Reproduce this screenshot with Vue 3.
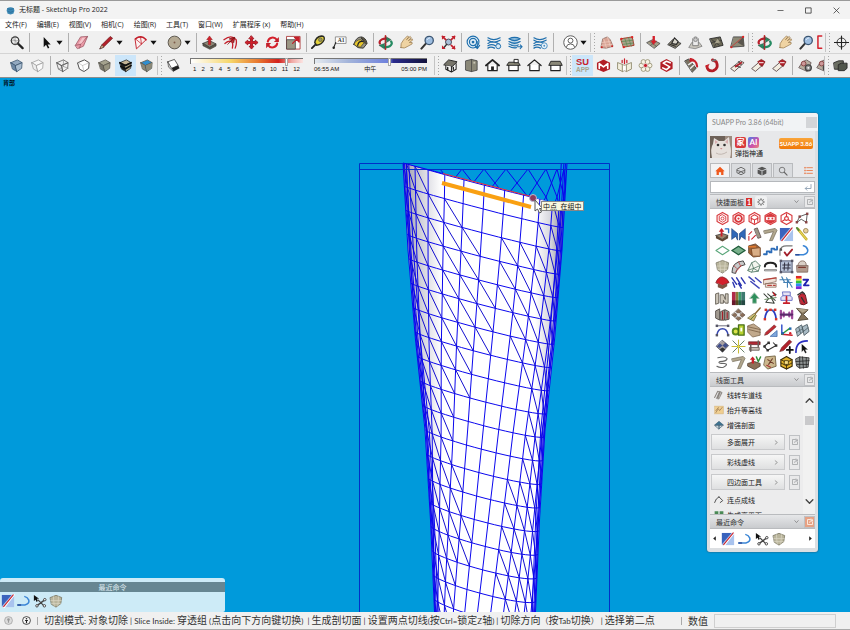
<script setup>
import { ref } from 'vue'

/* ---------- icon helpers (16 x 16 grid) ---------- */
const P = (d, f = 'none', s = 'none', w = 1) =>
  `<path d="${d}" fill="${f}" stroke="${s}" stroke-width="${w}" stroke-linejoin="round" stroke-linecap="round"/>`
const C = (x, y, r, f = 'none', s = 'none', w = 1) =>
  `<circle cx="${x}" cy="${y}" r="${r}" fill="${f}" stroke="${s}" stroke-width="${w}"/>`
const cube = (a, b, c, s = '#333') =>
  P('M2 5L9 2L14 5L7 8Z', a, s, 0.8) + P('M2 5L7 8L8.500 14.500L4 12Z', b, s, 0.8) + P('M7 8L14 5L13.500 11L8.500 14.500Z', c, s, 0.8)
const hexa = (inner) => P('M8 1.500L13.800 4.700V11.300L8 14.500L2.200 11.300V4.700Z', '#fff', '#d8383c', 1.2) + inner
const waves =
  P('M1 3Q7 7 14 3M1 5.500Q7 9.500 14 5.500M1 9Q6 5.500 13 9.500M1 11.500Q5 9 9 11.500M1 14Q4 12 8 14', 'none', '#1f6fad', 1.3)
const houseBase = P('M3 7.500V13.500H13V7.500', '#fff', '#222', 1.2)
const squares = (pts, c) => pts.map(([x, y]) => `<rect x="${x - 1.300}" y="${y - 1.300}" width="2.6" height="2.6" fill="${c}"/>`).join('')

const icons = {
  mag: C(6.5, 6, 4, '#eee', '#333', 1.3) + P('M9.500 9L14.500 14', 'none', '#222', 2.4) + P('M6.500 1V11M1.500 6H11.500M3 2.500L10 9.500', 'none', '#777', 0.5),
  cursor: P('M5 2V13L7.500 10.500L9.500 14.500L11 13.700L9.200 10H12.500Z', '#111'),
  eraser: P('M1.500 11L7 2L14.500 1.500L10 12L4 14.500Z', '#e99aa6', '#9b5462', 0.8) + P('M1.500 11L7 10L14.500 1.500M7 10L6 14', 'none', '#9b5462', 0.8) + P('M5 9L9 3L12 3L8 9Z', '#f6c5cb'),
  pencil: P('M1 14.500L3 10.500L12 1.500L14.500 3.500L5 12.800Z', '#b3202b', '#611', 0.7) + P('M1 14.500L3 10.500L5 12.800Z', '#d8b58c', '#333', 0.5),
  arc: P('M2.500 4Q9 -0.500 14 5L4 14.500Z', '#fbf0f0', '#c3202c', 1) + P('M2.500 4Q9 -0.500 14 5', 'none', '#c3202c', 1.5) + P('M2.500 4L9 9.500M8 2L9 9.500', 'none', '#c3202c', 0.8),
  disc: C(8, 8, 6.8, '#b5aa94', '#57524a', 1) + C(8, 8, 1, '#7d5a4a'),
  pushpull: P('M1 9L8 6L15 9.500L8.500 13Z', '#8c8674', '#333', 0.8) + P('M1 9V11.500L8.500 15.300L15 11.800V9.500L8.500 13Z', '#5b5648', '#333', 0.6) + P('M6.800 10V5H5L8 1L11 5H9.200V10Z', '#d4202b', '#811', 0.5),
  offset: P('M1 5Q9 -1 14 5Q15 9 13 14', 'none', '#c3202c', 1.4) + P('M2 9Q7 5 10 8Q11 11 10 14', 'none', '#c3202c', 1.4) + P('M5 10L12 3M7 4L12.500 2.500L11.500 8Z', '#c3202c', '#711', 0.8),
  move: P('M8 1L10.500 4H9V7H12V5.500L15 8L12 10.500V9H9V12H10.500L8 15L5.500 12H7V9H4V10.500L1 8L4 5.500V7H7V4H5.500Z', '#d4202b', '#a11822', 1),
  rotate: P('M3 7A5.300 5.300 0 0 1 12.500 5', 'none', '#d4202b', 2.2) + P('M13 9A5.300 5.300 0 0 1 3.500 11', 'none', '#d4202b', 2.2) + P('M14.800 2V7.500H9.500ZM1.200 14V8.500H6.500Z', '#c11f2a'),
  scale: P('M1 1.500H15V15H1Z', '#fff', '#a33', 0.9) + P('M1 5H10V15H1Z', '#9b9684', '#444', 0.8) + P('M7 9L12 4M9 2.500H14V7.500Z', '#d4202b', '#c11f2a', 1.3),
  tape: P('M1 14L5 10', 'none', '#222', 2) + P('M4 8Q5 2 11 1Q15 1 14 5Q12 10 6 11Z', '#e4d23c', '#2a2a22', 1.5) + C(10, 5, 2, '#9e9a58', '#444', 0.6),
  label: P('M4 2H15V9H4Z', '#fff', '#777', 0.8) + `<text x="6" y="7.800" font-size="6" font-family="Liberation Serif, serif" font-weight="700" fill="#333">A1</text>` + P('M4 8L2 13', 'none', '#222', 1.1) + C(1.8, 13.5, 1.3, '#222'),
  paint: P('M1 10Q3 2 9 2Q14 3 15 9L11 14Q5 15 1 10Z', '#9a9582', '#333', 1) + P('M1 10Q3 5 8 5L12 8L8 13Q4 13 1 10Z', '#e8c72c', '#444', 0.8) + P('M5 11Q6 6 11 7M9 3L14 9', 'none', '#222', 1.3) + P('M9 2Q13 3 15 9L12 9Q11 5 9 2Z', '#55503f'),
  orbit: P('M8 1V15', 'none', '#b22', 1.8) + P('M2 9A6 4 0 0 1 11 4.500', 'none', '#b71f2b', 2.3) + P('M14 7A6 4 0 0 1 5 12', 'none', '#258a61', 2.4) + P('M9 2L14 5L9 8ZM7 9L1 11L7 15Z', '#258a61', '#333', 0.4) + P('M8 5V14', 'none', '#933', 1),
  hand: P('M2 13.500Q1 9 5 5L9 1L10.500 2L8 5L12 1.500L13 3L10 6L14 4L14.500 5.500L11 8L14 8L14 9.500L9.500 12Q6 15 2 13.500Z', '#efd3a2', '#907045', 0.7),
  glass: P('M1.500 14.500L6 9.500', 'none', '#333', 2.2) + C(9.8, 5.8, 4.4, '#9dbde0', '#3c5673', 1.4) + P('M7.500 5Q8.500 3 10.500 3', 'none', '#e5f1fc', 1),
  extents: C(8, 7.5, 3.2, '#a8bfd8', '#445', 1) + P('M6 10L3 13.500', 'none', '#333', 1.6) + P('M1.500 1.500L5 5M14.500 1.500L11 5M14.500 14.500L11 11', 'none', '#c3202c', 1.8) + P('M1 1H5L1 5ZM15 1V5L11 1ZM15 15H11L15 11ZM1 15V11L5 15Z', '#c3202c'),
  swirl: C(7.5, 7.5, 6.3, '#e4f0f8', '#1f6fad', 1.2) + C(7.5, 7.5, 3.8, 'none', '#1f6fad', 1.3) + C(7.5, 7.5, 1.5, '#1f6fad') + P('M12 7V13M9.500 11L12 14.500L14.500 11', 'none', '#1f6fad', 1.2),
  stackA: waves + C(12, 12, 2.6, '#d7e8f4', '#1f6fad', 1),
  stackB: P('M1 4Q7 1 13 4Q7 8 1 4ZM1 7Q7 11 13 7M1 9.500Q7 13.500 11 10.500M1 12Q5 14.500 9 13.500', '#8dbcdc', '#1f6fad', 1.2) + P('M10 12.500H15M13 10.500L15 12.500L13 14.500', 'none', '#1f6fad', 1.1),
  stackC: waves + C(12, 11.5, 3.2, '#e7f1f8', '#4b8fc3', 1) + C(12, 11.5, 1, '#4b8fc3'),
  account: C(8, 8, 7.2, '#fff', '#555', 1) + C(8, 6, 2.6, '#fff', '#555', 1) + P('M3.500 13Q4 9.500 8 9.500Q12 9.500 12.500 13', 'none', '#555', 1),
  sandA: P('M2 13L4 4L9 2L12 5L15 12L8 14Z', '#d8a394', '#8d6b60', 0.8) + P('M3 8L12 7M5 4L8 14M9 2L12 12M2.500 11L14 10', 'none', '#f2d0c4', 0.7) + C(3, 13, 1, '#c22') + C(14, 12, 1, '#c22'),
  sandB: P('M1 4L13 2L15 11L4 13Z', '#a9a48c', '#a32', 1) + P('M5 3.500L8 12.500M9 2.500L12 12M2 7L14 5.500M3 10L14.500 8.500', 'none', '#5c8a55', 0.8) + C(1.5, 4, 1.2, '#d22') + C(13, 2.3, 1.2, '#d22') + C(4, 13, 1.2, '#d22'),
  smoove: P('M1 8L7 5L15 9L9 14Z', '#a49d86', '#444', 0.8) + P('M4 7L11 12M11 7L5 11', 'none', '#444', 0.6) + P('M7 1H9.500V6H11.500L8 10.500L5 6H7Z', '#d4202b'),
  stamp: P('M1 10L6 5L15 9L9 14Z', '#8c8775', '#333', 0.9) + P('M5 9L8 3L12 7L10 10Z', '#d8d5ca', '#222', 1.1) + P('M3 10L9 12', 'none', '#222', 1),
  drape: P('M1 13L4 8L12 8L15 12L8 14.500Z', '#c9c6bd', '#777', 0.8) + P('M5 11V4Q8 0 11 4V11Z', '#ececec', '#777', 0.9) + C(8, 5, 2, '#ccc', '#777', 0.8),
  detail: P('M1 4L12 2L15 11L5 13.500Z', '#6c6957', '#222', 0.9) + P('M3 5L11 11M10 3L6 12M2.500 8L13 6', 'none', '#333', 0.8) + P('M9 4L12 8L6 9Z', '#aaa58f'),
  flip: P('M4 2L14 2L15 12L1 13Z', '#8d8976', '#444', 0.9) + P('M14 2L15 12L8 8Z', '#5a564e') + P('M1 13L14 2', 'none', '#c33', 0.8) + C(14, 2, 1.2, '#d22') + C(1.500, 13, 1.1, '#d22'),
  cut: P('M1 1H5M1 1V14H5', 'none', '#d4202b', 1.6),
  target: C(8, 8, 4.8, 'none', '#333', 1) + P('M8 1V15M0 8H16', 'none', '#222', 1.2),
  xray: cube('#93a9c0', '#6d88a5', '#a9bdd0', '#35506b'),
  backedge: cube('#f8f8f8', '#eee', '#fafafa', '#999'),
  wire: cube('none', 'none', 'none', '#555') + P('M4 12L9 9L14 11M9 2V9', 'none', '#777', 0.6),
  hidden: P('M2 5L9 2L14 5L13.500 11L8.500 14.500L4 12Z', '#fff', '#444', 1) + P('M2 5L7 8L14 5M7 8L8.500 14.500', 'none', '#aaa', 0.6),
  shaded: cube('#a4a28e', '#77756a', '#96937f', '#55534a'),
  textured: cube('#c5b596', '#222', '#b3a482', '#222') + P('M2 5L8 8L14 5M3 9L8 11.500L14 8', 'none', '#111', 1.7),
  mono: cube('#2f8fd0', '#8a8979', '#2f80bd', '#55534a') + P('M7 8L14 5L13.500 11L8.500 14.500Z', '#8d8a78'),
  section: P('M2 4L9 1.500L13 8L6 11Z', '#fff', '#444', 0.9) + P('M6 11L13 8L14.500 11L8 14.500Z', '#222') + P('M2 4L6 11L8 14.500L3 10Z', '#ccc', '#444', 0.7),
  iso: P('M1 7L6 2L15 4L10 9Z', '#77756a', '#222', 1) + P('M3 8V12L9 15V9M9 15L14 12V6', '#f6f6f6', '#222', 1.1) + P('M5 10V12.500M11 10V12', 'none', '#222', 1.5),
  top: P('M2 3L8 1.500L14 3V13L8 14.500L2 13Z', '#8a8878', '#444', 0.9) + P('M8 1.500V14.500', 'none', '#444', 0.8) + P('M10 4H12V6H10Z', '#c9c6b5'),
  front: houseBase + P('M1 8L8 2L15 8', 'none', '#222', 1.9) + P('M6.500 9H9.500V13.500H6.500Z', '#222'),
  right: houseBase + P('M1 7.500L3 4.500H13L15 7.500Z', '#8a8878', '#222', 1) + P('M9 1.500H13V5H9Z', '#fff', '#222', 1),
  back: houseBase + P('M1 8L8 2L15 8', 'none', '#222', 1.4),
  left: houseBase + P('M1 7.500L3 3.500H13L15 7.500Z', '#8a8878', '#222', 1),
  suapp: `<text x="1" y="7.500" font-size="10" font-family="Liberation Sans, sans-serif" font-weight="700" fill="#c8202a">SU</text><text x="1" y="15" font-size="7" font-family="Liberation Sans, sans-serif" font-weight="700" fill="#aaa58c">APP</text>`,
  mred: P('M1 5L8 1.500L15 5V12L8 15L1 12Z', '#b31e26') + P('M3.500 11V6L8 9.500L12.500 6V11', 'none', '#fff', 1.8),
  book: P('M1 5L6 7V14.500L1 12ZM15 5L10 7V14.500L15 12Z', '#f3efdf', '#8b8566', 0.9) + P('M6 7L8 8L10 7V14.500L8 13.500L6 14.500Z', '#fff', '#8b8566', 0.7) + P('M8 6V1M5.500 5V2.500M10.500 5V2.500', 'none', '#c8202a', 1.3),
  flower: [0, 60, 120, 180, 240, 300].map((a) => C(8 + 4.4 * Math.cos(a * 0.01745), 8 + 4.4 * Math.sin(a * 0.01745), 2.5, '#f7f3e3', '#8b8566', 0.8)).join('') + C(8, 8, 2.2, '#c8202a', '#fff', 0.7),
  sred: P('M8 1L14.500 4.500V11.500L8 15L1.500 11.500V4.500Z', '#b31e26') + P('M12 5L8 3.500L4.500 5.500L11.500 9.500L8 12.500L4 10.500', 'none', '#fff', 1.7),
  toolA: P('M1 3L5 1L13 11L9 15Z', '#77705f', '#333', 0.8) + P('M5 7L8 5M7 11L10 8', 'none', '#eee', 1.5) + P('M7 3Q13 1 14 9M10 2L7 1', 'none', '#c8202a', 2.2),
  toolB: P('M2 9Q3 14.500 9 13.500Q15 11 12 4L8 2', 'none', '#b31e26', 3) + P('M5 6L2 12L0.500 8Z', '#c8202a') + P('M8 3L11 2', 'none', '#777', 2),
  planA: P('M1 11L11 3L15 5L5 14Z', '#f2ede0', '#544', 0.9) + P('M5 8L11 10M9 4L12 7', 'none', '#555', 1.2) + P('M6 9L12 5', 'none', '#b0202a', 2),
  planB: P('M1 11L8 5L12 8L5 14Z', '#f2ede0', '#544', 0.9) + P('M7 4L11 1.500L15 4L12 9L9 7', '#b0202a', '#711', 0.7) + P('M9 5L13 5', 'none', '#fff', 1),
  gear: P('M1 10L5 4L9 2L14 5L10 14Z', '#b8aea0', '#655', 0.9) + C(6, 6, 2.5, '#c99', '#844', 1) + C(11, 10.5, 3.2, '#999', '#444', 1.4) + C(11, 10.5, 1, '#fff'),
  solid: P('M1 5L6 3H11V8L8 12H2Z', '#6b6e62', '#222', 0.9) + P('M6 7L9 5.500H15V11L12 13.500H6Z', '#50564c', '#222', 0.9),

  hexA: hexa(P('M8 4L11.500 6V10L8 12L4.500 10V6Z', 'none', '#d8383c', 1) + C(8, 8, 1.6, '#fff', '#d8383c', 1)),
  hexB: hexa(C(8, 8, 3.6, 'none', '#d8383c', 2) + C(8, 8, 1.2, '#d8383c')),
  hexC: hexa(P('M4.500 11V6L8 4L11.500 6V11M4 7.500L8 9.500L12 7.500M8 9.500V13', 'none', '#d8383c', 1.1)),
  hexD: hexa(P('M3 5L8 2.500L13 5V6H3ZM3 10H13V11L8 13.500L3 11Z', '#d8383c') + P('M3 6H13V10H3Z', '#fff', '#d8383c', 1) + C(6, 8, 1, '#d8383c') + C(10, 8, 1, '#d8383c')),
  hexE: hexa(P('M8 8V3M8 8L3.500 11M8 8L12.500 11', 'none', '#d8383c', 1.2) + C(8, 8, 2, '#fff', '#d8383c', 1.2)),
  poly: P('M2 12L5 6L13 3L12 12L7 9Z', 'none', '#555', 1) + squares([[2, 12], [5, 6], [13, 3], [12, 12]], '#844'),
  boxup: P('M1 9L8 7L14 9L8 13Z', '#9d866c', '#333', 0.8) + P('M1 9V12L8 15.500L14 12V9L8 13Z', '#5d4634') + P('M6 10V5H4L7 1L10 5H8V10Z', '#c8202a') + P('M11 2H14.500V6', 'none', '#2a6fc0', 1.5),
  wings: P('M1 2L7 7V14L5 10L1 13ZM15 2L9 7V14L11 10L15 13Z', '#2f68b8', '#1a3f7a', 0.7),
  stick: P('M8 2L11 1L15 11L12 12Z', '#9c9584', '#544', 0.8) + P('M2 14V10M2 8L5 5M5 13L9 9', 'none', '#c8202a', 1.1),
  corner: P('M1 4L13 1.500L15 3.500L10 14.500H7L11 5L2 7Z', '#b1a78e', '#6d644f', 0.7),
  split: P('M1 1H15V15H1Z', '#a9c3ee') + P('M1 1H12L1 14Z', '#3a63bd') + P('M3.500 15L14.500 1', 'none', '#fff', 2.4) + P('M3 14.500L14 1', 'none', '#c8202a', 1.2),
  tools: P('M3 2L12 13', 'none', '#c9b228', 2.8) + P('M3 2L12 13', 'none', '#efe07a', 0.9) + C(11.5, 4, 2.5, '#e8cf9a', '#8a7444', 0.8) + P('M2 1L4 3.500', 'none', '#558a3b', 2),
  diaO: P('M1 8L8 3.500L15 8L8 12.500Z', '#fff', '#5aa67a', 1.1),
  diaF: P('M1 8L8 3.500L15 8L8 12.500Z', '#79b08c', '#1f5c3a', 1.5),
  brown: P('M2 3L9 1L14 5V14L7 15L2 11Z', '#9c6238', '#5d3820', 0.8) + P('M5 6L14 5V14L6 14Z', '#d9ae86', '#7d4c2a', 0.8) + P('M2 4H9', 'none', '#e07a30', 1.6),
  steps: P('M1 12H4V9H7V10H9V6H12V7H15V4', 'none', '#2c6cb8', 1.9),
  check: P('M1 13V8Q2 3 8 3H14', 'none', '#777', 1.2) + P('M6 10L8.500 13.500L14 7', 'none', '#a3202a', 1.9) + squares([[2, 7]], '#555'),
  hook: P('M1 12.500H9Q14.500 11 13.500 7Q12 3.500 9 3', 'none', '#3b86d6', 1.7) + P('M1 12.500H4', 'none', '#2c4e9a', 1.8),
  shield: P('M1.500 4L8 1.500L14.500 4L13.500 11L8 15L3 12Z', '#b9b59c', '#6f6b58', 0.8) + P('M5 3L6 14M11 3L10 14M2 7.500L14 7.500M3 11H13', 'none', '#dad6c4', 0.8),
  fan: P('M1 14Q1 3 13 2L15 6Q6 8 5 15Z', '#c9c9c9', '#444', 1) + P('M5 14L11 7M3 7L6 10M8 3L10 7', 'none', '#b33', 0.8),
  wirepoly: P('M1 12L5 4L9 2L14 7L12 13L5 14Z', '#f3f5ef', '#4c7460', 0.9) + P('M5 4L7 10L14 7M7 10L5 14M7 10L12 13M1 12L7 10', 'none', '#4c7460', 0.8),
  arch: P('M2 8Q2 4 8 4Q14 4 14 8', 'none', '#222', 2.2) + P('M2 12H14', 'none', '#666', 2) + P('M2 12H14', 'none', '#ddd', 0.8),
  hash: P('M2 2H14V14H2Z', '#b8c3d8', '#4d5571', 1) + P('M6 4L5.500 12M10 4L9.500 12M4 6.500H12M4 9.500H12', 'none', '#334', 1.1) + squares([[2, 2], [14, 2], [2, 14], [14, 14]], '#556'),
  bag: P('M3 7Q4 2 8 2Q12 2 12 7', '#d9cfc6', '#8b7468', 1) + P('M2 7H14L13.500 14H2.500Z', '#b29a8c', '#7b6256', 0.8) + P('M4 9H11', 'none', '#7b3a30', 1.4),
  roof: P('M1 8Q3 2 8 2Q13 3 15 8L8 11Z', '#d4202b', '#7c1118', 0.8) + P('M3 9V13L8 15L13 12V9L8 11Z', '#7d5442'),
  dashA: P('M1 3L6 10M6 3L11 11M11 3L15 9M2 8L4 13M8 9L11 14', 'none', '#2c35b0', 1.5),
  dashB: P('M2 2L8 7M4 7L13 14M9 3L15 8', 'none', '#3f46b8', 1.5),
  paper: P('M1 5L14 3V7L1 10ZM3 9H14V13H3Z', '#f0e2d8', '#8a6a5a', 0.8) + P('M1 5L14 3M5 11H9M11 11H13', 'none', '#b8403a', 1.3),
  lines: P('M1 5H12M3 2L6 8M8 3L14 13M5 8H14M9 6V13', 'none', '#4380b4', 1.2),
  rainbow: P('M1 1H7V4H1Z', '#e02828') + P('M1 4H7V6H1Z', '#f2e32c') + P('M1 6H7V9H1Z', '#35c23a') + P('M1 9H7V12H1Z', '#2a8ff0') + P('M1 12H7V15H1Z', '#7a2bd8') + P('M9 5H14L9.500 11H14.500', 'none', '#2222b0', 2),
  emm: P('M1 3L4 2V13L1 14ZM6 4H9L11 9V3H14V13H11L9 10V13H6Z', '#ccc6ba', '#5d564c', 0.9),
  grad: P('M1 1H5V15H1Z', '#b02a48') + P('M5 1H8V15H5Z', '#8c7a38') + P('M8 1H11V15H8Z', '#3d9a6c') + P('M11 1H15V15H11Z', '#3e7a70') + P('M1 10H15V15H1Z', '#0006'),
  greenup: P('M8 2L13 8H10V13H6V8H3Z', '#2f8f5b', '#9ab9a5', 0.8),
  scribble: P('M1 3L6 8L3 12L12 13L8 6L14 4L10 1M5 3L13 10', 'none', '#3a4038', 1.1) + P('M2 9L14 7', 'none', '#5f8a5a', 1) + P('M11 2L13 5', 'none', '#c8202a', 1.5),
  press: P('M4 1H12V5L14 7V10H2V7L4 5Z', '#e6e2f4', '#6a6fc4', 1) + P('M4 5H12', 'none', '#6a6fc4', 1) + P('M5 13H11M8 6V13', '#c8202a', '#c8202a', 1.8),
  tank: P('M4 5Q7 1 11 4L13 13Q9 16 6 14Z', '#c02a38', '#5d1118', 0.9) + P('M3 4L8 1L10 3M7 7L10 12', 'none', '#333', 1.4),
  city: P('M1 4L5 2V14L1 12ZM6 5L10 3V14H6ZM11 3L15 5V13L11 14Z', '#a19a90', '#4a423e', 0.9) + P('M8 5V13M13 6V12', 'none', '#a3202a', 1.2),
  tiles: P('M8 2L11 5L8 7L5 5ZM4 6L7 8.500L4 11L1 8.500ZM12 6L15 8.500L12 11L9 8.500ZM8 10L11 12L8 14.500L5 12Z', '#8b6f5a', '#4a3a30', 0.6) + P('M8 6.500L10 8.500L8 10.500L6 8.500Z', '#eee'),
  broom: P('M14 1L8 8', 'none', '#8a6c3a', 1.6) + P('M8 7L10 9L7 15L1 12Z', '#cbb66e', '#6d6030', 0.8) + P('M4 13L8 9', 'none', '#59742d', 1),
  archB: P('M2 13Q3 3 8 3Q13 3 14 13', 'none', '#2b3dc0', 1.9) + P('M3 3H13', 'none', '#888', 0.8) + squares([[2, 13], [3, 3], [8, 3], [13, 3], [14, 13]], '#d4322b'),
  purple: P('M2 4V12M14 4V12M5 6V10M11 6V10', 'none', '#a04a9a', 2.4) + P('M2 8H14', 'none', '#5a2a6a', 2.4),
  hour: P('M2 1.500L14 3L9 8L14 13L3 14.500L7 8Z', '#84745c', '#4b402e', 0.9) + P('M2 1.500L14 3L8 6Z', '#b3a68c'),
  archS: P('M2 13Q3 6 8 6Q13 6 14 13', 'none', '#3949b0', 1.6) + P('M2 3H14', 'none', '#667', 1) + squares([[2, 3], [14, 3], [2, 13], [14, 13]], '#556'),
  lock: C(5, 9, 3.2, '#dbe24a', '#5c8a1c', 2) + P('M8 2H14V13H8Z', '#b8d230', '#4a701a', 1.4) + P('M10 5H12V9H10Z', '#fff'),
  stair: P('M1 3L7 1L14 6V13L6 15L1 10Z', '#c1a98c', '#7b6248', 0.8) + P('M1 4L14 7M2 7L14 10', 'none', '#7b6248', 0.9),
  penblue: P('M3 10L12 2L14 4L5 12L2 13Z', '#c02a32', '#611', 0.6) + P('M8 14L15 8V14Z', '#7fa8dc', '#3a66a8', 0.8),
  axes: P('M3 2V12', 'none', '#2a49c8', 1.5) + P('M3 12L14 13', 'none', '#c8202a', 1.5) + P('M3 12L11 6', 'none', '#2f9a3c', 1.4) + squares([[4, 11], [12, 6]], '#26a') + C(12, 11, 1.3, '#d4202b'),
  panes: P('M1 6L7 2L9 9L3 14ZM8 4L13 1.500L15 9L10 13Z', '#a9bbc5', '#47585f', 0.9) + P('M4 4.500L6 11M2 10L8 6M9 9L14 5', 'none', '#47585f', 0.8),
  checker: P('M8 1.500L14.500 7L8 14L1.500 8Z', '#a8a0a0', '#445', 0.8) + P('M5 4.500L8 7L5 9.500L2 8ZM11 4L14 7L11 9.500L8 7Z', '#42508c') + P('M8 9L11 11L8 14L5 11Z', '#333'),
  starl: P('M2 2L14 14M14 2L2 14', 'none', '#4e6b50', 0.9) + P('M8 1V15M1 8H15', 'none', '#c9bd38', 1.1) + C(8, 8, 1.4, '#e8d840'),
  vise: P('M2 3H14V6H2Z', '#b32a34', '#5d1118', 0.7) + P('M3 9H13V12H3Z', '#c7bdb4', '#5a4d48', 0.8) + P('M4 6V13M12 2V8', 'none', '#6b5d58', 1.6),
  polyl: P('M1 8L6 4L7 5M5 12L14 7L11 4M5 12L2 9', 'none', '#333', 1.1) + squares([[1.7, 8], [6, 4], [5, 12], [14, 7]], '#333'),
  penplus: P('M1 13L3 9L11 1L13.500 3L5 12Z', '#b3202b', '#611', 0.7) + P('M11.500 8.500V15M8.300 11.700H14.800', 'none', '#111', 1.9),
  arcsel: P('M1 14Q1 2 13 2', 'none', '#2a2fc0', 1.8) + P('M7 5V14L9 12L11 15.500L12.500 14.500L11 11.500H14Z', '#111', '#fff', 0.4),
  spiral: P('M3 3Q11 1 13 4Q12 7 5 7Q2 9 10 9Q15 10 9 13Q5 14 2 12', 'none', '#666', 1.1),
  redv: P('M1 9L8 7L14 9V12L8 15.500L1 12Z', '#8c7058', '#4b3a2c', 0.8) + P('M5 9V5H3L6 1.500L9 5H7.500V9Z', '#c8202a') + P('M10 2L12 7L14.500 2', 'none', '#2f8f3b', 1.5),
  card: P('M3 2L13 1L14 12L5 15L1 11Z', '#cbb68c', '#6b5a38', 0.9) + P('M5 5L11 9M10 4L6 10', 'none', '#6b3a28', 1.1) + P('M4 11L8 13', 'none', '#a33', 1.3),
  gold: P('M2 5L8 1.500L14 5V12L8 15L2 12Z', '#e3b42a', '#3a2c08', 1.2) + P('M2 5L8 8L14 5M8 8V15M2 8.500L8 11.500L14 8.500', 'none', '#3a2c08', 0.9) + P('M6 6H10V10H6Z', '#f7df86', '#3a2c08', 0.8),
  mesh: P('M1 4L5 2L15 3L14 13L5 14L2 12Z', '#8f9494', '#333', 0.9) + P('M1 7L15 6M2 10L14 10M5 2V14M8 2L9 14M12 3V13', 'none', '#222', 0.8),
  nodes: P('M1 1V8L3 6.500L4 9L5.500 8L4.500 5.500H7Z', '#111') + P('M5 13L13 7M6 7L12 13', 'none', '#444', 1.5) + C(13.5, 6.5, 1.4, '#fff', '#333', 1) + C(13, 13.5, 1.4, '#fff', '#333', 1) + C(4.5, 13.5, 1.4, '#fff', '#333', 1),
  road: P('M4 13L9 2L13 4L8 14Z', '#8b8580', '#6a645e', 0.8) + P('M1 12L6 2L8 3', 'none', '#8b8580', 1.7) + P('M8 12L11 4', 'none', '#ddd', 0.9),
  contour: P('M1 2H15V14H1Z', '#f0cf91', '#cfa96b', 0.8) + P('M3 12L7 6L9 9L13 4M3 9L7 4', 'none', '#9b7a54', 1.2),
  dome: P('M1 8L8 2L15 8Z', '#3f7592', '#2c4f64', 0.8) + P('M2 9H14L8 14Z', '#d6e1e6', '#2c4f64', 0.9) + P('M8 9V14', 'none', '#2c4f64', 1.6),
  link: P('M1 12Q3 5 8 3L14 9L10 12', 'none', '#4a4a4a', 1.5) + C(8, 3, 1, '#4a4a4a'),
  green: P('M1 2H7V9H1ZM9 2H15V9H9Z', '#4a8a55') + P('M3 9V13M11 9V13', 'none', '#4a8a55', 1.4),

  home: P('M8 1L15.500 8.500H13.500V14.500H9.800V10H6.200V14.500H2.500V8.500H0.500Z', '#f0591c'),
  globe: P('M2 5L8 2L14 5V11L8 14L2 11Z', 'none', '#666', 1.5) + P('M2 7L8 9L14 7M4 11Q8 7 12 11', 'none', '#666', 1.5),
  block: P('M1 4L8 7L15 4L8 1Z', '#555') + P('M1 5.500L7.300 8V15L1 12ZM15 5.500L8.700 8V15L15 12Z', '#555'),
  find: C(6.5, 6.5, 4.5, 'none', '#666', 1.3) + P('M10 10L14.500 14.500', 'none', '#666', 1.8),
  list: P('M5 3H15M5 8H15M5 13H15', 'none', '#e87a4b', 1.6) + squares([[1.8, 3], [1.8, 8], [1.8, 13]], '#e87a4b'),
  enter: P('M14 3V11H3M6 7.500L2.500 11L6 14.500', 'none', '#8fa0b3', 1.8),
  cog: C(8, 8, 4.6, 'none', '#777', 1.8) + P('M8 1V3M8 13V15M1 8H3M13 8H15M3 3L4.500 4.500M11.500 11.500L13 13M13 3L11.500 4.500M4.500 11.500L3 13', 'none', '#777', 1.8),
  down: P('M4 6L8 10.500L12 6', 'none', '#777', 1.6),
  chevR: P('M5 4L10 8L5 12', 'none', '#777', 1.5),
  chevU: P('M2 11L8 5L14 11', 'none', '#444', 2.4),
  chevD: P('M2 5L8 11L14 5', 'none', '#444', 2.4),
  pop: P('M9 3H3V13H13V8', 'none', 'currentColor', 1.7) + P('M7 9Q7 5 13 4M10 2L13.500 4L11.500 7', 'none', 'currentColor', 1.6),
  triL: P('M11 3V13L5 8Z', '#222'),
  triR: P('M5 3V13L11 8Z', '#222'),
  triD: P('M1 4H15L8 13Z', '#111'),
  statA: C(8, 8, 7, '#dcdcdc', '#999', 1.2) + P('M5.500 5.500Q8 2.500 10.500 5.500Q10 8 9 9V12H7V9Q6 8 5.500 5.500Z', '#999'),
  statB: C(8, 8, 7, '#f6f6f6', '#222', 1.4) + C(8, 4.8, 1.4, '#222') + P('M5.500 7H10.500V9H9V13H7V9H5.500Z', '#222'),
  logo: P('M2 4Q8 0 14 4L15 9Q13 12 14 13Q8 17 2 13Q3 11 1 9Z', '#3b87b3') + P('M3 5Q8 8 13 5M4 10Q8 13 12 10', 'none', '#2b6d99', 1.4),
  winMin: P('M2 8H14', 'none', '#333', 1.6),
  winMax: P('M2 2H14V14H2Z', 'none', '#333', 1.8),
  winClose: P('M2 2L14 14M14 2L2 14', 'none', '#333', 1.7),
}

/* i: button, d: button with a drop-down, s and t: separators, g: toolbar grip, h: half-hidden button */
const i = (n) => ({ t: 'i', n })
const d = (n) => ({ t: 'd', n })
const s = { t: 's' }
const t = { t: 't' }
const g = { t: 'g' }
const rowOne = [i('mag'), s, d('cursor'), s, i('eraser'), d('pencil'), d('arc'), d('disc'), s, i('pushpull'), i('offset'), i('move'), i('rotate'), i('scale'), t, i('tape'), i('label'), i('paint'), t, i('orbit'), i('hand'), i('glass'), i('extents'), t, i('swirl'), i('stackA'), i('stackB'), t, i('stackC'), s, d('account'), g, i('sandA'), i('sandB'), s, i('smoove'), i('stamp'), i('drape'), i('detail'), i('flip'), g, i('orbit'), i('hand'), i('glass'), { t: 'h', n: 'cut' }, g, i('target')]
const rowTwoA = [i('xray'), i('backedge'), t, i('wire'), i('hidden'), i('shaded'), { t: 'i', n: 'textured', on: true }, i('mono'), g, i('section')]
const rowTwoB = [g, i('iso'), i('top'), i('front'), i('right'), i('back'), i('left'), g, { t: 'i', n: 'suapp', on: true }, i('mred'), i('book'), i('flower'), i('sred'), t, i('toolA'), i('toolB'), t, i('planA'), i('planB'), i('planB'), s, i('gear'), { t: 'h', n: 'gear' }, g, i('solid')]

const menus = ['文件(F)', '编辑(E)', '视图(V)', '相机(C)', '绘图(R)', '工具(T)', '窗口(W)', '扩展程序 (x)', '帮助(H)']
const month = ref(86)
const time = ref(67)
const search = ref('')
const amount = ref('')

const quick = 'hexA hexB hexC hexD hexE poly boxup wings stick corner split tools diaO diaF brown steps check hook shield fan wirepoly arch hash bag roof dashA dashB paper lines rainbow emm grad greenup scribble press tank city tiles broom archB purple hour archS lock stair penblue axes panes checker starl vise polyl penplus arcsel spiral corner redv card gold mesh'.split(' ')
const recent = ['split', 'hook', 'nodes', 'shield']
const tabs = ['home', 'globe', 'block', 'find']
const lineTools = [
  { text: '线转车道线', icon: 'road' },
  { text: '抬升等高线', icon: 'contour' },
  { text: '增强剖面', icon: 'dome' },
  { text: '多面展开', group: true },
  { text: '彩线虚线', group: true },
  { text: '四边面工具', group: true },
  { text: '连点成线', icon: 'link' },
  { text: '生成高平面', icon: 'green' },
]

/* ---------- tapering tower mesh ---------- */
const CX = 485
const lerp = (tbl, v) => {
  if (v <= tbl[0][0]) return tbl[0][1]
  for (let k = 1; k < tbl.length; k++) {
    if (v <= tbl[k][0]) {
      const [a, b] = tbl[k - 1]
      const [c, e] = tbl[k]
      return b + ((e - b) * (v - a)) / (c - a)
    }
  }
  return tbl[tbl.length - 1][1]
}
const halfW = (y) => lerp([[163, 82], [250, 77], [340, 69.5], [430, 60], [520, 54.5], [612, 50.5], [660, 48]], y)
const drift = (y) => { const q = Math.max(0, y - 172); return 0.0335 * q + 0.000122 * q * q }
const node = (deg, yc) => {
  const a = (deg * Math.PI) / 180
  const sag = 2 + ((yc - 170) / 440) * 5
  let y = yc
  for (let n = 0; n < 3; n++) y = yc + 0.26 * halfW(y) * Math.sin(a) + sag * Math.cos(a)
  return [CX + halfW(y) * Math.sin(a), y]
}
const f1 = (n) => Math.round(n * 10) / 10
const ringY = (k) => 207 + 23.8 * k
const rings = []
for (let k = -2; k < 19; k++) {
  const pts = []
  for (let a = -90; a <= 90; a += 10) pts.push(node(a, ringY(k)).map(f1).join(' '))
  rings.push('M' + pts.join('L'))
}
const columns = []
for (let c = -6; c < 10; c++) {
  const pts = []
  for (let k = -3; k < 19; k++) {
    const deg = 14.6 * c - drift(ringY(k))
    if (deg > -90 && deg < 90) pts.push(node(deg, ringY(k)).map(f1).join(' '))
  }
  if (pts.length > 1) columns.push('M' + pts.join('L'))
}
const leftLim = [[165, 424], [226, 462], [255, 480], [300, 494], [333, 490], [355, 478], [380, 466], [400, 459], [430, 456], [465, 458], [495, 463], [530, 468], [560, 466], [590, 458], [612, 450]]
const rightLim = [[200, 556], [215, 544], [240, 530], [255, 503], [300, 501], [340, 510], [375, 521], [415, 530], [455, 524], [485, 511], [520, 503], [560, 498], [612, 500]]
const diagonals = []
for (let k = -3; k < 18; k++) {
  for (let c = -6; c < 10; c++) {
    const d1 = 14.6 * c - drift(ringY(k))
    const d2 = 14.6 * (c + 1) - drift(ringY(k + 1))
    if (d1 < -90 || d2 > 90) continue
    const [x1, y1] = node(d1, ringY(k))
    const [x2, y2] = node(d2, ringY(k + 1))
    const mx = (x1 + x2) / 2
    const my = (y1 + y2) / 2
    if (mx < lerp(leftLim, my) || mx > lerp(rightLim, my)) diagonals.push(`M${f1(x1)} ${f1(y1)}L${f1(x2)} ${f1(y2)}`)
  }
}
const levels = [163, 250, 340, 430, 520, 612, 660]
const side = (sign, k) => levels.map((y) => `${f1(CX + sign * halfW(y) * k)} ${y}`)
const body = 'M403 163L533 197L564 206L' + side(1, 1).slice(1).join('L') + 'L' + side(-1, 1).reverse().join('L') + 'Z'
const rims = [-1, 1].flatMap((sg) => [1, 0.982, 0.962, 0.93].map((k) => 'M' + side(sg, k).join('L')))
const apex = [440, 462, 484, 506, 528, 546, 557, 564, 567]
const lattice = apex.slice(1).map((x, n) => `M${apex[n]} 169L${x} 197L${apex[n]} 225M${x} 169L${apex[n]} 197L${x} 225`).join('')
</script>

<template>
  <div class="window">
    <header class="titlebar">
      <svg class="ic ic9" viewBox="0 0 16 16" v-html="icons.logo"></svg>
      <h1>无标题 - SketchUp Pro 2022</h1>
      <div class="winbtns">
        <button v-for="b in ['winMin', 'winMax', 'winClose']" :key="b" :aria-label="b">
          <svg class="ic ic7" viewBox="0 0 16 16" v-html="icons[b]"></svg>
        </button>
      </div>
    </header>

    <nav class="menubar">
      <button v-for="m in menus" :key="m">{{ m }}</button>
    </nav>

    <div class="toolbar">
      <template v-for="(x, n) in rowOne" :key="n">
        <button v-if="x.n" class="tool" :class="x.t" :aria-label="x.n">
          <svg class="ic ic15" viewBox="0 0 16 16" v-html="icons[x.n]"></svg>
          <svg v-if="x.t === 'd'" class="ic ic7" viewBox="0 0 16 16" v-html="icons.triD"></svg>
        </button>
        <span v-else class="sep" :class="x.t"></span>
      </template>
    </div>

    <div class="toolbar second">
      <template v-for="(x, n) in rowTwoA" :key="n">
        <button v-if="x.n" class="tool" :class="[x.t, { on: x.on }]" :aria-label="x.n">
          <svg class="ic ic15" viewBox="0 0 16 16" v-html="icons[x.n]"></svg>
        </button>
        <span v-else class="sep" :class="x.t"></span>
      </template>
      <label class="slider">
        <input v-model="month" type="range" class="months" aria-label="月份" />
        <span class="scale"><b v-for="m in 12" :key="m">{{ m }}</b></span>
      </label>
      <label class="slider">
        <input v-model="time" type="range" class="hours" aria-label="时间" />
        <span class="scale clock"><b>06:55 AM</b><b>中午</b><b>05:00 PM</b></span>
      </label>
      <template v-for="(x, n) in rowTwoB" :key="n">
        <button v-if="x.n" class="tool" :class="[x.t, { on: x.on }]" :aria-label="x.n">
          <svg class="ic ic15" viewBox="0 0 16 16" v-html="icons[x.n]"></svg>
        </button>
        <span v-else class="sep" :class="x.t"></span>
      </template>
    </div>

    <main class="viewport">
      <svg class="scene" viewBox="0 78 850 534" preserveAspectRatio="xMidYMin slice">
        <defs>
          <linearGradient id="shade" x1="0" x2="1" y1="0" y2="0">
            <stop offset="0" stop-color="#9a9aa6" />
            <stop offset="0.120" stop-color="#d4d4dc" />
            <stop offset="0.240" stop-color="#fff" />
            <stop offset="0.820" stop-color="#fff" />
            <stop offset="0.920" stop-color="#d4d4dc" />
            <stop offset="1" stop-color="#85858f" />
          </linearGradient>
          <clipPath id="solid"><path :d="body" /></clipPath>
          <clipPath id="open"><path d="M403 163L533 197L566 206V169H425Z" /></clipPath>
        </defs>
        <g clip-path="url(#open)" class="blue"><path :d="lattice" /></g>
        <path :d="body" fill="url(#shade)" />
        <g clip-path="url(#solid)" class="blue">
          <path v-for="(p, n) in rings" :key="'r' + n" :d="p" />
          <path v-for="(p, n) in columns" :key="'c' + n" :d="p" />
          <path v-for="(p, n) in diagonals" :key="'d' + n" :d="p" class="fine" />
        </g>
        <g class="blue">
          <path v-for="(p, n) in rims" :key="'e' + n" :d="p" />
          <path d="M359.500 620V163.500H609.500V620M359.500 169.500H609.500" class="frame" />
          <path d="M403 163L443 173.500" />
        </g>
        <path d="M443 173.500L533 197" class="cutline" />
        <path d="M442 183L531 207" class="mark" />
        <circle cx="533" cy="198" r="3.500" class="snap" />
        <path d="M535 200V211L537.500 209L539.500 213L541.500 212L539.500 208.500H542.500Z" class="pointer" />
      </svg>
      <span class="viewname">背部</span>
      <span class="tip">中点&nbsp; 在组中</span>

      <section class="dock">
        <h2>最近命令</h2>
        <div>
          <button v-for="r in recent" :key="r" :aria-label="r">
            <svg class="ic ic14" viewBox="0 0 16 16" v-html="icons[r]"></svg>
          </button>
        </div>
      </section>

      <aside class="panel">
        <header class="ptitle">
          <span>SUAPP Pro 3.86 (64bit)</span>
          <button aria-label="关闭"></button>
        </header>
        <div class="profile">
          <svg class="avatar" viewBox="0 0 22 22">
            <rect width="22" height="22" fill="#6e6259" />
            <rect x="15" width="7" height="22" fill="#9c8b7f" />
            <path d="M2 22Q0 12 3 8L4 2L9 5H14L19 1L20 9Q22 15 20 22Z" fill="#e6e0dc" />
            <path d="M5 4L8 6L5 8ZM18 3L15 6L18 8Z" fill="#d7aeb0" />
            <circle cx="8" cy="9" r="1.300" fill="#333" />
            <circle cx="14.500" cy="9" r="1.300" fill="#333" />
            <path d="M10 12H12.500L11.200 13.500Z" fill="#c98a8c" />
            <path d="M6 17Q11 20 17 16" stroke="#c2b8b2" fill="none" />
          </svg>
          <div class="who">
            <div class="badges"><i class="fam">家</i><i class="ai">AI</i></div>
            <span>弹指神通</span>
          </div>
          <button class="version">SUAPP 3.86</button>
        </div>
        <div class="tabs">
          <button v-for="(b, n) in tabs" :key="b" :class="{ active: n === 0 }" :aria-label="b">
            <svg class="ic ic10" viewBox="0 0 16 16" v-html="icons[b]"></svg>
          </button>
          <button class="listbtn" aria-label="列表"><svg class="ic ic9" viewBox="0 0 16 16" v-html="icons.list"></svg></button>
        </div>
        <label class="search">
          <input v-model="search" type="text" aria-label="搜索" />
          <svg class="ic ic8" viewBox="0 0 16 16" v-html="icons.enter"></svg>
        </label>
        <div class="phead">
          <h3>快捷面板</h3><em>1</em>
          <button class="cog" aria-label="设置"><svg class="ic ic8" viewBox="0 0 16 16" v-html="icons.cog"></svg></button>
          <svg class="ic ic7 fold" viewBox="0 0 16 16" v-html="icons.down"></svg>
          <button class="pop" aria-label="弹出"><svg class="ic ic8" viewBox="0 0 16 16" v-html="icons.pop"></svg></button>
        </div>
        <div class="quick">
          <button v-for="(q, n) in quick" :key="n" :aria-label="q">
            <svg class="ic ic15" viewBox="0 0 16 16" v-html="icons[q]"></svg>
          </button>
        </div>
        <div class="phead">
          <h3>线面工具</h3>
          <svg class="ic ic7 fold" viewBox="0 0 16 16" v-html="icons.down"></svg>
          <button class="pop" aria-label="弹出"><svg class="ic ic8" viewBox="0 0 16 16" v-html="icons.pop"></svg></button>
        </div>
        <div class="listwrap">
          <ul>
            <li v-for="l in lineTools" :key="l.text" :class="{ group: l.group }">
              <button class="entry">
                <svg v-if="l.icon" class="ic ic10" viewBox="0 0 16 16" v-html="icons[l.icon]"></svg>
                <span>{{ l.text }}</span>
                <svg v-if="l.group" class="ic ic7" viewBox="0 0 16 16" v-html="icons.chevR"></svg>
              </button>
              <button v-if="l.group" class="pop" aria-label="弹出"><svg class="ic ic8" viewBox="0 0 16 16" v-html="icons.pop"></svg></button>
            </li>
          </ul>
          <div class="scroll">
            <svg class="ic ic9" viewBox="0 0 16 16" v-html="icons.chevU"></svg>
            <span class="thumb"></span>
            <svg class="ic ic9" viewBox="0 0 16 16" v-html="icons.chevD"></svg>
          </div>
        </div>
        <div class="phead">
          <h3>最近命令</h3>
          <svg class="ic ic7 fold" viewBox="0 0 16 16" v-html="icons.down"></svg>
          <button class="pop hot" aria-label="弹出"><svg class="ic ic8" viewBox="0 0 16 16" v-html="icons.pop"></svg></button>
        </div>
        <div class="recent">
          <button aria-label="上一个"><svg class="ic ic7" viewBox="0 0 16 16" v-html="icons.triL"></svg></button>
          <button v-for="r in recent" :key="r" class="cmd" :aria-label="r">
            <svg class="ic ic14" viewBox="0 0 16 16" v-html="icons[r]"></svg>
          </button>
          <button class="next" aria-label="下一个"><svg class="ic ic7" viewBox="0 0 16 16" v-html="icons.triR"></svg></button>
        </div>
      </aside>
    </main>

    <footer class="status">
      <svg class="ic ic9" viewBox="0 0 16 16" v-html="icons.statA"></svg>
      <svg class="ic ic9 second-mark" viewBox="0 0 16 16" v-html="icons.statB"></svg>
      <span class="rule"></span>
      <p>切割模式<small>: </small>对象切除<small> | Slice Inside: </small>穿透组<small> (</small>点击向下方向键切换<small>)&nbsp; | </small>生成剖切面<small> | </small>设置两点切线<small>(</small>按<small>Ctrl=</small>锁定<small>Z</small>轴<small>) | </small>切除方向<small>（</small>按<small>Tab</small>切换<small>） | </small>选择第二点</p>
      <label><span class="rule"></span>数值 <input v-model="amount" type="text" /></label>
    </footer>
  </div>
</template>

<style>
body { margin: 0; }
</style>

<style scoped>
* { box-sizing: border-box; }
.window {
  min-height: 100vh; display: flex; flex-direction: column; overflow: hidden;
  font-family: Lato, "Noto Sans CJK SC", sans-serif; font-size: 7px; line-height: 10px; color: #222;
  background: #f0f0f0; border-top: 1px solid #9a9a9a;
}
button { border: 0; padding: 0; margin: 0; background: none; font: inherit; color: inherit; display: flex; align-items: center; justify-content: center; }
h1, h2, h3, p, ul { margin: 0; padding: 0; font-size: inherit; font-weight: 400; list-style: none; }
.ic { display: block; flex: none; }
.ic7 { width: 7px; height: 7px; }
.ic8 { width: 8px; height: 8px; }
.ic9 { width: 9px; height: 9px; }
.ic10 { width: 10px; height: 10px; }
.ic14 { width: 14px; height: 14px; }
.ic15 { width: 15px; height: 15px; }

.titlebar { height: 18px; display: flex; align-items: center; padding: 0 10px 0 6px; background: #f3f3f3; }
.titlebar h1 { margin-left: 4px; font-family: "Open Sans", "Noto Sans CJK SC", sans-serif; white-space: nowrap; }
.winbtns { margin-left: auto; display: flex; gap: 21px; }
.menubar { height: 12px; display: flex; gap: 10px; padding-left: 5px; background: #fff; font-family: "Open Sans", "Noto Sans CJK SC", sans-serif; white-space: nowrap; }

.toolbar { height: 23px; display: flex; align-items: center; padding-left: 6px; background: #f0f0f0; border-bottom: 1px solid #d4d4d4; overflow: hidden; }
.toolbar.second { height: 24px; border-bottom: 1px solid #8d8d8d; }
.tool { flex: none; width: 21px; height: 21px; }
.tool.d { width: 34px; gap: 2px; padding-left: 3px; }
.tool.h { width: 8px; overflow: hidden; justify-content: flex-start; }
.tool.on { background: #cce6fa; }
.sep { flex: none; width: 5px; height: 19px; background: linear-gradient(#b0b0b0, #b0b0b0) center / 1px 100% no-repeat; }
.sep.t { width: 4px; }
.sep.g { width: 6px; background: repeating-linear-gradient(#a8a8a8 0 1px, #f0f0f0 1px 3px) right 1px top 0 / 1px 100% no-repeat, linear-gradient(#c4c4c4, #c4c4c4) left / 1px 100% no-repeat; }

.slider { flex: none; width: 113px; margin-left: 6px; display: flex; flex-direction: column; gap: 1px; }
.slider + .slider { margin: 0 7px 0 11px; }
.slider input { appearance: none; width: 100%; height: 6px; margin: 0; border-top: 1px solid #777; border-left: 1px solid #777; }
.slider input::-webkit-slider-thumb { appearance: none; width: 3px; height: 8px; background: #fff; border: 1px solid #aaa; }
.months { background: linear-gradient(90deg, #fff 0, #f6d66a 35%, #e8772f 60%, #d3201c 78%, #f0a9a5 90%, #fbe4e2) 0 0 / 100% 4px no-repeat; }
.hours { background: linear-gradient(90deg, #e3e9ef 0, #a3b4da 30%, #6d80dc 66%, #2b2b8c 70%, #12123c) 0 0 / 100% 4px no-repeat; }
.scale { display: flex; justify-content: space-between; padding: 0 3px; font-family: "Liberation Sans", "Noto Sans CJK SC", sans-serif; font-size: 6px; line-height: 8px; color: #111; }
.scale b { font-weight: 400; }
.scale.clock { padding: 0; }

.viewport { position: relative; flex: 1; min-height: 534px; background: #009adb; overflow: hidden; }
.scene { position: absolute; inset: 0; width: 100%; height: 100%; }
.blue { fill: none; stroke: #0a06ee; stroke-width: 1; }
.blue .fine { stroke: #1410d0; }
.blue .frame { stroke: #0030c8; }
.cutline { fill: none; stroke: #e02a3a; stroke-width: 1; }
.mark { fill: none; stroke: #f9a012; stroke-width: 4; }
.snap { fill: #8b3a5c; stroke: #b9b9d2; stroke-width: 1; }
.pointer { fill: #fff; stroke: #555; stroke-width: 1; }
.viewname { position: absolute; left: 3px; top: 1px; font-size: 6px; line-height: 8px; color: #012; font-weight: 700; }
.tip { position: absolute; left: 541px; top: 123px; padding: 0 1px; line-height: 8px; background: #f8f8e0; border: 1px solid #888; color: #111; white-space: nowrap; }

.dock { position: absolute; left: 0; bottom: 0; width: 225px; padding-top: 4px; background: #cdebf7; border-radius: 3px 3px 2px 0; }
.dock h2 { background: #668692; color: #dfeaf0; text-align: center; line-height: 10px; }
.dock div { display: flex; gap: 2px; padding: 2px 1px 4px; }

.panel { position: absolute; right: 32px; top: 35px; width: 111px; padding: 0 3px 4px; background: #dcdfe2; border-radius: 3px; box-shadow: 0 0 2px #345; }
.ptitle { height: 18px; margin: 0 -3px; padding: 0 1px 0 5px; display: flex; align-items: center; justify-content: space-between; background: #f1f3f5; color: #888; border-radius: 3px 3px 0 0; white-space: nowrap; }
.ptitle button { width: 11px; height: 11px; background: #d3d5d8; }
.profile { display: flex; align-items: flex-start; padding: 5px 2px 5px 0; background: #e7e8ea; }
.avatar { width: 22px; height: 22px; flex: none; }
.who { margin-left: 3px; white-space: nowrap; }
.badges { display: flex; gap: 2px; padding-top: 1px; }
.badges i { width: 11px; height: 11px; font-style: normal; font-weight: 700; font-size: 8px; line-height: 10px; text-align: center; color: #fff; border-radius: 2px; }
.badges .fam { background: #d83a3c; }
.badges .ai { background: linear-gradient(135deg, #4a7de8, #d050a8 60%, #e88a7a); }
.version { margin-left: auto; width: 34px; height: 11px; margin-top: 2px; border-radius: 2px; background: linear-gradient(#f9a53a, #f07808); color: #fff; font-weight: 700; font-size: 6px; white-space: nowrap; }
.tabs { display: flex; gap: 1px; height: 15px; background: #e7e8ea; border-bottom: 1px solid #bbb; }
.tabs button { width: 20px; background: #dadcdf; border: 1px solid #b9bbbe; border-bottom: 0; }
.tabs .active { background: #f3f3f4; }
.tabs .listbtn { margin-left: auto; width: 13px; background: none; border: 0; }
.search { display: flex; align-items: center; height: 12px; margin: 3px 0 1px; padding-right: 2px; background: #fff; border: 1px solid #b5b8bc; }
.search input { flex: 1; min-width: 0; height: 10px; border: 0; padding: 0 2px; font: inherit; background: none; }
.phead { height: 15px; display: flex; align-items: center; padding-left: 6px; background: linear-gradient(#e6e7e9, #c9cbce); border: 1px solid #b9bbbe; border-width: 1px 0; color: #333; white-space: nowrap; }
.phead em { margin-left: 2px; padding: 0 1px; min-width: 6px; font-style: normal; font-weight: 700; line-height: 8px; text-align: center; color: #fff; background: #d8302c; }
.phead .cog { margin-left: 3px; width: 12px; height: 12px; background: #f0f1f2; border-radius: 2px; }
.fold { margin-left: auto; }
.pop { flex: none; width: 11px; height: 12px; margin-left: 4px; background: #e9e9ea; border: 1px solid #bfc1c4; color: #a4a6a8; }
.pop.hot { background: #e6a184; color: #fff3ea; }
.quick { display: grid; grid-template-columns: repeat(6, 16px); grid-auto-rows: 16px; justify-content: center; padding: 1px 5px 2px 4px; background: #fff; }
.listwrap { display: flex; height: 127px; background: #ececed; overflow: hidden; }
.listwrap ul { flex: 1; padding-left: 1px; overflow: hidden; }
li { display: flex; align-items: center; height: 15px; }
li.group { height: 20px; }
.entry { gap: 3px; padding-left: 3px; white-space: nowrap; }
.group .entry { flex: 1; height: 16px; padding: 0 4px 0 15px; justify-content: space-between; background: linear-gradient(#f6f6f6, #dfe0e1); border: 1px solid #c9cacc; }
.group .pop { height: 15px; margin: 0 3px 0 4px; }
.scroll { width: 12px; display: flex; flex-direction: column; align-items: center; padding: 9px 0 8px; background: #f1f1f1; }
.thumb { width: 9px; height: 9px; margin: 11px 0 auto; background: #c9c9cb; }
.recent { height: 19px; display: flex; align-items: center; gap: 3px; padding: 0 1px; background: #fff; }
.recent .next { margin-left: auto; }

.status { height: 18px; display: flex; align-items: center; padding: 0 14px 0 4px; background: #f0f0f0; border-bottom: 1px solid #aaa; font-size: 10px; color: #333; white-space: nowrap; }
.second-mark { margin-left: 9px; }
.rule { width: 1px; height: 8px; margin: 0 6px; background: #aaa; }
.status p { line-height: 16px; }
.status small { font-size: 8px; }
.status label { margin-left: auto; display: flex; align-items: center; }
.status input { width: 122px; height: 14px; margin-left: 6px; border: 1px solid #cfcfcf; background: #f0f0f0; font: inherit; }
</style>
